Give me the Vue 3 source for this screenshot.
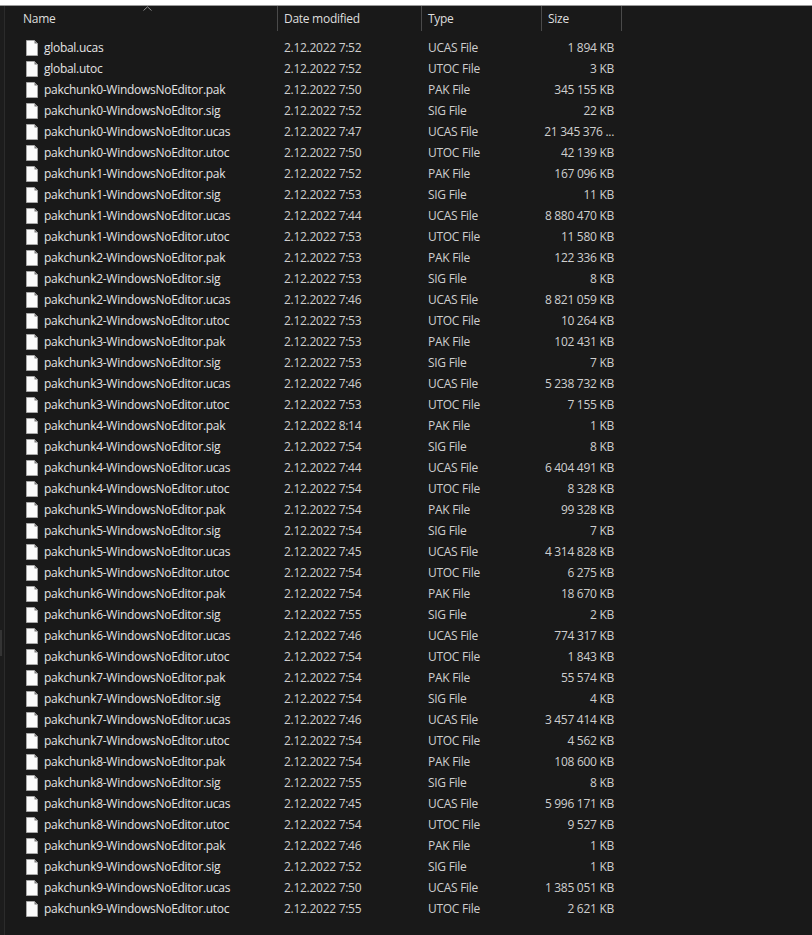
<template>
  <div class="window">
    <div class="top-strip"></div>
    <div class="pane">
      <div class="nav-edge"><div class="nav-thumb"></div></div>
      <div class="list">
        <div class="head">
          <span class="sort-arrow">
            <svg width="9" height="5" viewBox="0 0 9 5"><path d="M0.5 4.5 L4.5 0.8 L8.5 4.5" fill="none" stroke="#8f8f8f" stroke-width="1" /></svg>
          </span>
          <div class="hcol name">Name</div>
          <div class="hcol date">Date modified</div>
          <div class="hcol type">Type</div>
          <div class="hcol size">Size</div>
        </div>
        <ul class="rows">
          <li v-for="f in files" :key="f.name" class="row">
            <div class="cell name">
              <svg class="file-icon" width="12" height="16" viewBox="0 0 12 16">
                <path d="M0.5 0.5 H8.5 L11.5 3.5 V15.5 H0.5 Z" fill="#fbfbfb" stroke="#a8a8a8" stroke-width="1" />
                <path d="M8.5 0.5 V3.5 H11.5 Z" fill="#777" />
              </svg>
              <span>{{ f.name }}</span>
            </div>
            <div class="cell date">{{ f.date }}</div>
            <div class="cell type">{{ f.type }}</div>
            <div class="cell size">{{ f.size }}</div>
          </li>
        </ul>
      </div>
    </div>
  </div>
</template>

<script setup>
const TYPES = { ucas: 'UCAS File', utoc: 'UTOC File', pak: 'PAK File', sig: 'SIG File' }

const raw = [
  ['global.ucas', '7:52', '1 894 KB'],
  ['global.utoc', '7:52', '3 KB'],
  ['pakchunk0-WindowsNoEditor.pak', '7:50', '345 155 KB'],
  ['pakchunk0-WindowsNoEditor.sig', '7:52', '22 KB'],
  ['pakchunk0-WindowsNoEditor.ucas', '7:47', '21 345 376 ...'],
  ['pakchunk0-WindowsNoEditor.utoc', '7:50', '42 139 KB'],
  ['pakchunk1-WindowsNoEditor.pak', '7:52', '167 096 KB'],
  ['pakchunk1-WindowsNoEditor.sig', '7:53', '11 KB'],
  ['pakchunk1-WindowsNoEditor.ucas', '7:44', '8 880 470 KB'],
  ['pakchunk1-WindowsNoEditor.utoc', '7:53', '11 580 KB'],
  ['pakchunk2-WindowsNoEditor.pak', '7:53', '122 336 KB'],
  ['pakchunk2-WindowsNoEditor.sig', '7:53', '8 KB'],
  ['pakchunk2-WindowsNoEditor.ucas', '7:46', '8 821 059 KB'],
  ['pakchunk2-WindowsNoEditor.utoc', '7:53', '10 264 KB'],
  ['pakchunk3-WindowsNoEditor.pak', '7:53', '102 431 KB'],
  ['pakchunk3-WindowsNoEditor.sig', '7:53', '7 KB'],
  ['pakchunk3-WindowsNoEditor.ucas', '7:46', '5 238 732 KB'],
  ['pakchunk3-WindowsNoEditor.utoc', '7:53', '7 155 KB'],
  ['pakchunk4-WindowsNoEditor.pak', '8:14', '1 KB'],
  ['pakchunk4-WindowsNoEditor.sig', '7:54', '8 KB'],
  ['pakchunk4-WindowsNoEditor.ucas', '7:44', '6 404 491 KB'],
  ['pakchunk4-WindowsNoEditor.utoc', '7:54', '8 328 KB'],
  ['pakchunk5-WindowsNoEditor.pak', '7:54', '99 328 KB'],
  ['pakchunk5-WindowsNoEditor.sig', '7:54', '7 KB'],
  ['pakchunk5-WindowsNoEditor.ucas', '7:45', '4 314 828 KB'],
  ['pakchunk5-WindowsNoEditor.utoc', '7:54', '6 275 KB'],
  ['pakchunk6-WindowsNoEditor.pak', '7:54', '18 670 KB'],
  ['pakchunk6-WindowsNoEditor.sig', '7:55', '2 KB'],
  ['pakchunk6-WindowsNoEditor.ucas', '7:46', '774 317 KB'],
  ['pakchunk6-WindowsNoEditor.utoc', '7:54', '1 843 KB'],
  ['pakchunk7-WindowsNoEditor.pak', '7:54', '55 574 KB'],
  ['pakchunk7-WindowsNoEditor.sig', '7:54', '4 KB'],
  ['pakchunk7-WindowsNoEditor.ucas', '7:46', '3 457 414 KB'],
  ['pakchunk7-WindowsNoEditor.utoc', '7:54', '4 562 KB'],
  ['pakchunk8-WindowsNoEditor.pak', '7:54', '108 600 KB'],
  ['pakchunk8-WindowsNoEditor.sig', '7:55', '8 KB'],
  ['pakchunk8-WindowsNoEditor.ucas', '7:45', '5 996 171 KB'],
  ['pakchunk8-WindowsNoEditor.utoc', '7:54', '9 527 KB'],
  ['pakchunk9-WindowsNoEditor.pak', '7:46', '1 KB'],
  ['pakchunk9-WindowsNoEditor.sig', '7:52', '1 KB'],
  ['pakchunk9-WindowsNoEditor.ucas', '7:50', '1 385 051 KB'],
  ['pakchunk9-WindowsNoEditor.utoc', '7:55', '2 621 KB'],
]

const files = raw.map(([name, time, size]) => ({
  name,
  size,
  date: `2.12.2022 ${time}`,
  type: TYPES[name.split('.').pop()],
}))
</script>

<style>
html, body {
  background: #191919;
}
</style>

<style scoped>
.window {
  width: 812px;
  height: 935px;
  overflow: hidden;
  display: flex;
  flex-direction: column;
  background: #191919;
  color: #dedede;
  font-family: "Open Sans", "Liberation Sans", sans-serif;
  font-size: 12px;
  letter-spacing: -0.28px;
}

.top-strip {
  height: 5px;
  flex: none;
  background: #fff;
  border-bottom: 1px solid #9a9a9a;
}

.pane {
  flex: 1;
  display: flex;
}

.nav-edge {
  width: 4px;
  flex: none;
  background: #1c1c1c;
  border-right: 1px solid #2b2b2b;
  position: relative;
}

.nav-thumb {
  position: absolute;
  left: 0;
  top: 624px;
  width: 2px;
  height: 26px;
  background: #343434;
}

.list {
  flex: 1;
  position: relative;
}

.head {
  display: flex;
  height: 25px;
  align-items: stretch;
}

.sort-arrow {
  position: absolute;
  left: 138px;
  top: 0;
  line-height: 0;
}

.hcol {
  box-sizing: border-box;
  padding-left: 6px;
  line-height: 25px;
  color: #dedede;
  border-right: 1px solid #4a4a4a;
}

.hcol.name { width: 273px; padding-left: 18px; }
.hcol.date { width: 144px; }
.hcol.type { width: 120px; }
.hcol.size { width: 80px; }

.rows {
  list-style: none;
  margin: 6px 0 0;
  padding: 0;
}

.row {
  display: flex;
  height: 21px;
  align-items: center;
}

.cell {
  box-sizing: border-box;
  white-space: nowrap;
}

.cell.name {
  width: 273px;
  padding-left: 21px;
  display: flex;
  align-items: center;
  gap: 6px;
  color: #e4e4e4;
}

.file-icon {
  flex: none;
}

.cell.date { width: 144px; padding-left: 6px; color: #cfcfcf; }
.cell.type { width: 120px; padding-left: 6px; color: #cfcfcf; }
.cell.size { width: 72px; text-align: right; color: #cfcfcf; }
</style>
